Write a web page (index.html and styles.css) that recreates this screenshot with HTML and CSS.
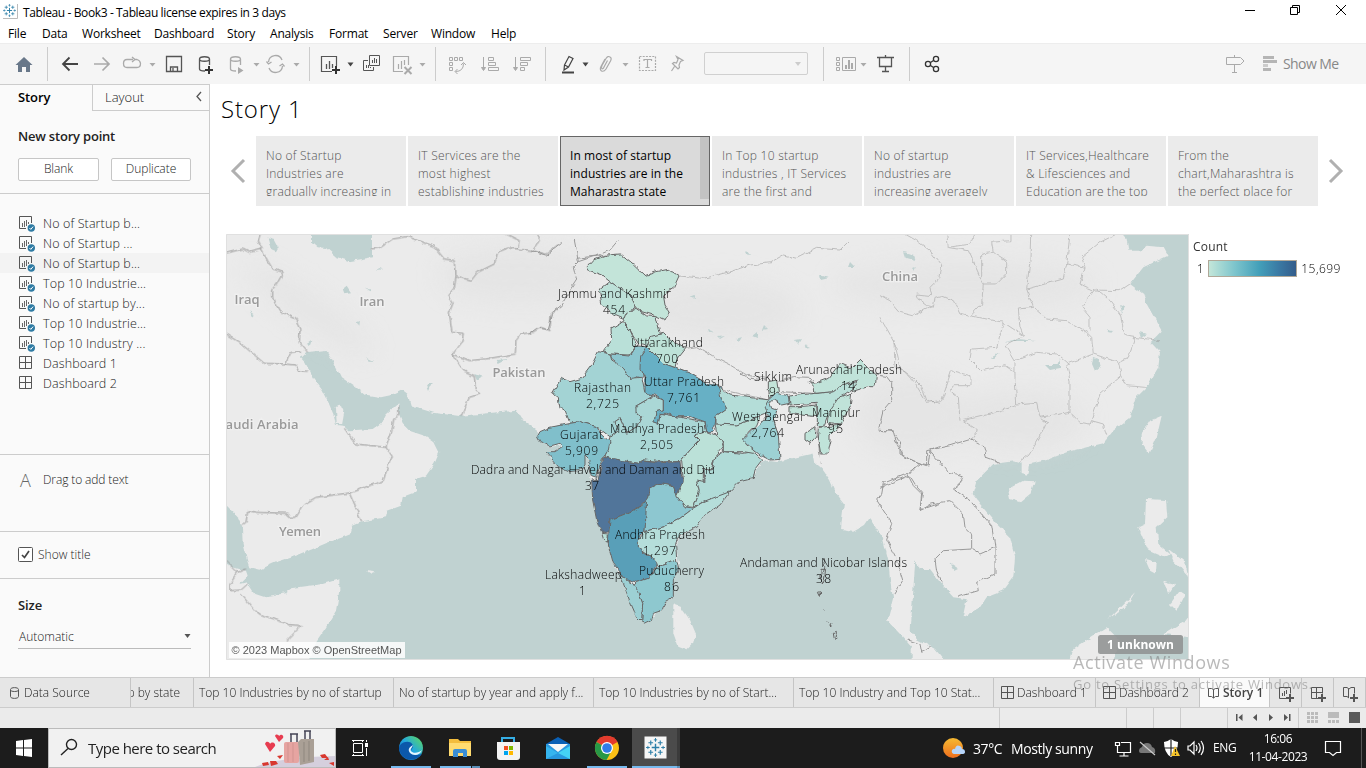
FILE: index.html
```html
<!DOCTYPE html>
<html lang="en">
<head>
<meta charset="utf-8">
<title>Tableau - Book3</title>
<link rel="stylesheet" href="styles.css">
</head>
<body>
<svg class="defs" width="0" height="0" aria-hidden="true">
  <defs>
    <symbol id="caret" viewBox="0 0 6 4"><path d="M0 0H6L3 4Z"/></symbol>
    <symbol id="sheet" viewBox="0 0 18 18"><path d="M13.500 8V1.500H1.500V13.500H8" fill="none" stroke="#555"/><path d="M4.500 8v4M6.500 6v6M8.500 5v6M10.500 7v2" stroke="#666"/><circle cx="13.300" cy="13" r="3.700" fill="#2f7ba3"/><path d="M11.500 13l1.300 1.400 2.300-2.800" fill="none" stroke="#fff"/></symbol>
    <symbol id="dash" viewBox="0 0 14 14"><path d="M.5.5h12v12H.5zM6.500.5v12M.5 6.500h12" fill="none" stroke="#555"/></symbol>
    <symbol id="tablogo" viewBox="0 0 20 20"><g fill="none" stroke="#2d7fa8"><path stroke-width="1.500" d="M10 6v8M6 10h8"/><path stroke-width="1.200" d="M5 2.500v5M2.500 5h5M15 2.500v5M12.500 5h5M5 12.500v5M2.500 15h5M15 12.500v5M12.500 15h5"/><path stroke-width="1" d="M10 0v4M8.300 2h3.400M10 16v4M8.300 18h3.400M0 10h4M2 8.300v3.400M16 10h4M18 8.300v3.400"/></g></symbol>
  </defs>
</svg>
<div class="window">
  <header class="titlebar">
    <svg class="applogo" width="16" height="16"><use href="#tablogo" width="13" height="13"/><path d="M14.500 0v14.500H0" fill="none" stroke="#bbb"/></svg>
    <span class="wintitle">Tableau - Book3 - Tableau license expires in 3 days</span>
    <svg width="136" height="24" viewBox="1230 0 136 24" fill="none" stroke="#000"><path d="M1245 10.500h10M1290.500 7.500h7v7h-7zM1292.500 7v-1.500h7v7h-2M1336 5l10 10M1346 5l-10 10"/></svg>
  </header>
  <nav class="menubar"><span class="m1">File</span><span class="m2">Data</span><span class="m3">Worksheet</span><span class="m4">Dashboard</span><span class="m5">Story</span><span class="m6">Analysis</span><span class="m7">Format</span><span class="m8">Server</span><span class="m9">Window</span><span>Help</span></nav>
  <div class="toolbar">
    <svg width="47" height="41" viewBox="0 43 47 41"><path d="M15.500 65L24 57l8.500 8H30v7h-4v-5h-4v5h-4v-7z" fill="#687789"/></svg>
    <i class="sep"></i>
    <svg width="261" height="41" viewBox="48 43 261 41" fill="none" stroke="#aaa" stroke-width="1.300">
      <path d="M78 64H63M69.500 57.500L63 64l6.500 6.500" stroke="#444" stroke-width="1.800"/>
      <path d="M94 64h15M102.500 57.500L109 64l-6.500 6.500" stroke-width="1.700"/>
      <path d="M133 59.500h-6q-3.500 0-3.500 4t3.500 4h10q3.500 0 3.500-4-.2-3-3.500-4h-3M132 57l3 2.500-3 2.500"/>
      <path d="M149.500 63h6l-3 3.500z" fill="#aaa" stroke="none"/>
      <path d="M166.500 56.500h15v15h-15zM170.500 71v-4h7v4M173 68v3" stroke="#555"/>
      <path d="M205 71q-5.500 0-5.500-2V59c0-3 10-3 10 0v6M199.500 59c0 3 10 3 10 0" stroke="#555"/>
      <path d="M209 66v8M205 70h8" stroke="#333" stroke-width="2"/>
      <path d="M236 71q-5.500 0-5.500-2V59c0-3 10-3 10 0v6M230.500 59c0 3 10 3 10 0"/>
      <path d="M238 67l5.500 3.500-5.500 3.500zM253.500 63h6l-3 3.500zM293.500 63h6l-3 3.500z" fill="#aaa" stroke="none"/>
      <path d="M268.500 62a7 7 0 0 1 13.500-2M282.500 66a7 7 0 0 1-13.500 2M266.500 61.500l2 2.500 3-2M279.500 66l3-2 2 2.500"/>
    </svg>
    <i class="sep"></i>
    <svg width="125" height="41" viewBox="310 43 125 41" fill="none" stroke="#555">
      <path d="M332 71.500h-10.500v-15h15V66" stroke-width="1.200"/><path d="M326.500 64v5M329.500 61v8M332.500 64v4" stroke-width="1.300"/><path d="M332 70h8M336 66v8" stroke="#333" stroke-width="2"/>
      <path d="M347.500 62.500h6l-3 4z" fill="#444" stroke="none"/>
      <path d="M369.500 55.500h10v10h-10zM368 60.500h-4.500v10h10V67M372.500 63v-3M374.500 63v-5M376.500 63v-4M366.500 68v-3M368.500 68v-3M370.500 68v-1"/>
      <g stroke="#aaa"><path d="M403 71.500h-9.500v-15h15V65M398.500 64v5M401.500 61v8M404.500 60v5" stroke-width="1.200"/><path d="M404.500 67l7 7M411.500 67l-7 7" stroke-width="2"/></g>
      <path d="M419.500 63h6l-3 3.500z" fill="#aaa" stroke="none"/>
    </svg>
    <i class="sep"></i>
    <svg width="109" height="41" viewBox="436 43 109 41" fill="none" stroke="#aaa">
      <path d="M449.500 57.500h3v3h-3zM454.500 57.500h3v3h-3zM459.500 57.500h3v3h-3zM449.500 62.500h3v3h-3zM449.500 67.500h3v3h-3zM455.500 71.500q8 0 8-8M461 65l2.500-2.500 2.500 2.500M457.500 69l-2.500 2.500 2.500 2.500"/>
      <path d="M483.500 57v12M488.500 57.500h5v3h-5zM488.500 62.500h7v3h-7zM488.500 67.500h10v3h-10z"/><path d="M481.500 67.500h4l-2 3z" fill="#aaa"/>
      <path d="M515.500 57v12M520.500 57.500h10v3h-10zM520.500 62.500h7v3h-7zM520.500 67.500h4v3h-4z"/><path d="M513.500 67.500h4l-2 3z" fill="#aaa"/>
    </svg>
    <i class="sep"></i>
    <svg width="158" height="41" viewBox="546 43 158 41" fill="none" stroke="#aaa" stroke-width="1.200">
      <path d="M564.500 65l4.500-8.500 4 2-4.500 8.500-4.500 3zM564.500 65l4 2" stroke="#444"/><path d="M562 72.500h12" stroke="#444" stroke-width="2"/>
      <path d="M582.500 62.500h6l-3 4z" fill="#444" stroke="none"/><path d="M622.500 63h6l-3 3.500z" fill="#aaa" stroke="none"/>
      <path d="M607.500 60.500l-3.500 6.500q-1 2.500-2 1.500-1-.5 0-3l4-7q2-3 4-1.500 2 1 .5 4l-4.500 8q-2 3-4.500 2-2-1.500-.5-4.500l4-7.500"/>
      <path d="M639.500 56.500h16v14h-16z" stroke-dasharray="2 1.200"/><path d="M644 61v-1.500h7.500V61M647.500 60v7.500M645.500 67.500h4"/>
      <path d="M676.500 56.500l6.500 4-2.500 1-1.500 3.500.5 2.500-1.500 1.500-5.500-5.500 1.500-1 2.500.5 1.500-3.500zM674.500 66.500l-3 4.500"/>
    </svg>
    <div class="combo"><svg width="6" height="4"><use href="#caret" fill="#ccc"/></svg></div>
    <i class="sep sepcombo"></i>
    <svg width="85" height="41" viewBox="824 43 85 41" fill="none" stroke="#aaa">
      <path d="M836.500 57.500h3v3h-3zM836.500 62.500h3v3h-3zM836.500 67.500h3v3h-3zM842.500 57.500h13v13h-13z"/><path d="M846 69v-4M849 69v-9M852 69v-6" stroke-width="2"/><path d="M860.500 63h6l-3 3.500z" fill="#aaa" stroke="none"/>
      <path d="M877 57.500h17M879.500 58v8.500h12v-8.500M885.500 55v3M885.500 67v5M882 71.500h7" stroke="#555" stroke-width="1.300"/>
    </svg>
    <i class="sep"></i>
    <svg width="40" height="41" viewBox="910 43 40 41" fill="none" stroke="#333" stroke-width="1.300"><circle cx="928" cy="64" r="2.600"/><circle cx="936" cy="59" r="2.600"/><circle cx="936" cy="69" r="2.600"/><path d="M930.500 62.500l3-2M930.500 65.500l3 2"/></svg>
    <svg class="push" width="60" height="41" viewBox="1220 43 60 41"><path d="M1226.500 57.500h14l3.500 3.500-3.500 3.500h-14zM1234.500 55v2M1234.500 65v7M1232 72.500h5" fill="none" stroke="#aaa"/><path d="M1263 56h11v3h-11zM1263 60h14v3h-14zM1263 68h8v3h-8z" fill="#b5b5b5"/><path d="M1263 64h5v3h-5z" fill="#ccc"/></svg>
    <span class="showme">Show Me</span>
  </div>

  <main class="work">
    <aside class="side">
      <div class="sidetabs"><b>Story</b><span>Layout</span><svg width="8" height="12"><path d="M6 1L2 5.500 6 10" fill="none" stroke="#555" stroke-width="1.300"/></svg></div>
      <section class="newpoint"><b>New story point</b><div class="btns"><span class="btn">Blank</span><span class="btn">Duplicate</span></div></section>
      <section class="sheets">
        <div class="row"><svg><use href="#sheet" width="18" height="18"/></svg>No of Startup b...</div>
        <div class="row"><svg><use href="#sheet" width="18" height="18"/></svg>No of Startup ...</div>
        <div class="row on"><svg><use href="#sheet" width="18" height="18"/></svg>No of Startup b...</div>
        <div class="row"><svg><use href="#sheet" width="18" height="18"/></svg>Top 10 Industrie...</div>
        <div class="row"><svg><use href="#sheet" width="18" height="18"/></svg>No of startup by...</div>
        <div class="row"><svg><use href="#sheet" width="18" height="18"/></svg>Top 10 Industrie...</div>
        <div class="row"><svg><use href="#sheet" width="18" height="18"/></svg>Top 10 Industry ...</div>
        <div class="row"><svg><use href="#dash" x="1" y="1" width="14" height="14"/></svg>Dashboard 1</div>
        <div class="row"><svg><use href="#dash" x="1" y="1" width="14" height="14"/></svg>Dashboard 2</div>
      </section>
      <section class="dragtext"><span class="bigA">A</span>Drag to add text</section>
      <section class="showtitle"><svg width="15" height="15"><rect x=".5" y=".5" width="14" height="14" rx="1" fill="#fff" stroke="#555"/><path d="M4 8l2.500 2.500L11 4" fill="none" stroke="#444" stroke-width="1.700"/></svg>Show title</section>
      <section class="size"><b>Size</b><div class="select">Automatic<svg width="7" height="4"><use href="#caret" fill="#555"/></svg></div></section>
    </aside>
    <div class="story">
      <h1>Story 1</h1>
      <div class="points">
        <svg class="arrow" width="16" height="26"><path d="M14 2L3 13l11 11" fill="none" stroke="#b0b0b0" stroke-width="3"/></svg>
        <div class="pt"><p>No of Startup<br>Industries are<br>gradually increasing in</p></div>
        <div class="pt"><p>IT Services are the<br>most highest<br>establishing industries</p></div>
        <div class="pt cur"><p>In most of startup<br>industries are in the<br>Maharastra state</p></div>
        <div class="pt"><p>In Top 10 startup<br>industries , IT Services<br>are the first and</p></div>
        <div class="pt"><p>No of startup<br>industries are<br>increasing averagely</p></div>
        <div class="pt"><p>IT Services,Healthcare<br>&amp; Lifesciences and<br>Education are the top</p></div>
        <div class="pt"><p>From the<br>chart,Maharashtra is<br>the perfect place for</p></div>
        <svg class="arrow r" width="18" height="26"><path d="M3 2l11 11L3 24" fill="none" stroke="#b0b0b0" stroke-width="3"/></svg>
      </div>
      <div class="viz">
        <svg class="map" width="963" height="426" viewBox="226 234 963 426">
          <defs>
            <filter id="coast" x="0" y="0" width="1" height="1" color-interpolation-filters="sRGB"><feTurbulence type="fractalNoise" baseFrequency=".15" numOctaves="2" seed="4" result="n"/><feDisplacementMap in="SourceGraphic" in2="n" scale="4.500" xChannelSelector="R" yChannelSelector="G"/></filter>
            <filter id="soft"><feGaussianBlur stdDeviation="12"/></filter>
          </defs>
          <path d="M226 234h963v426H226z" fill="#c0d2d1"/>
          <g filter="url(#coast)">
            <path d="M200 210h1010v470H200z" fill="#c0d2d1"/>
            <g fill="#ebebeb">
              <g transform="translate(226 234) scale(.33333)">
                <path d="M-30 -30H1200V600L930 588 910 572 885 555 870 530 790 537 700 546 620 536 555 517 545 480 530 468 500 482 465 490 420 482 390 460 345 430 318 375 300 348 240 355 225 370 235 380 260 430 290 470 305 500 322 540 330 572 352 575 370 592 400 590 440 588 465 570 480 540 517 508 520 545 530 570 550 590 600 607 625 625 640 655 625 690 600 725 570 735 570 775 530 790 525 815 485 830 480 850 410 862 378 875 375 900 350 910 300 928 260 945 210 965 150 985 100 1007 70 1000 62 975 50 930 48 880 35 850 -30 780z"/>
                <path d="M-30 975L20 1000 60 1010 65 1025 40 1050 62 1045 85 1080 110 1088 180 1078 200 1062 290 1050 340 1035 340 1070 330 1130 300 1180 265 1230 240 1300H-30zM418 1008L450 1012 430 1020z"/>
                <path d="M258 -30V25L275 40 300 42 330 68 370 82 438 70V-30zM125 10L145 15 158 40 150 55 135 48zM350 165L362 155 375 175 355 178zM418 163h14v6zM452 108l12-6 8 4zM392 265l10-4-2 14zM420 372l25 12-14-1zM602 450l15 0-8 18zM745 420l22 8-15 10zM812 378l36-3-30 15zM70 232l18 12-8 8zM242 330l15-10-5 14z" fill="#c0d2d1"/>
                <path d="M330 520Q342 500 355 530L348 570 332 570z"/>
              </g>
              <path d="M530 210H1100V430H890L850 445 776 462 560 430 530 420z"/>
              <g transform="translate(530 420) scale(.33333)">
                <path d="M20 35L30 65 60 80 98 76 75 95 48 95 65 120 90 145 115 156 150 152 167 110 180 120 178 150 188 230 200 290 215 340 235 370 248 420 262 458 285 500 305 545 320 590 345 611 365 600 380 575 400 570 405 545 430 530 430 485 447 430 437 380 450 350 490 325 520 290 590 230 620 190 670 172 698 120 715 85 740 -30H20z"/>
                <path d="M430 553L452 560 480 600 497 640 490 670 470 690 445 680 430 640z"/>
              </g>
              <g transform="translate(740 340) scale(.33333)"><path d="M-30 200L45 400 50 375 85 360 120 358 160 352 200 338 216 330 222 365 245 385 270 420 285 455 312 490 305 545 303 570 340 575 375 555 395 525 415 550 430 600 445 660 450 720 460 780 450 830 480 870 510 900 530 600 500 100 0 100z"/></g>
              <g transform="translate(880 234) scale(.33333)">
                <path d="M-40 -30V840L20 930 30 1000 40 1090 22 1160 60 1200 95 1240 95 1300H210L165 1245 110 1215 75 1170 65 1120 45 1090 70 1045 80 990 105 975 120 1005 150 1005 180 1045 220 1090 260 1095 248 1150 300 1120 320 1090 370 1070 400 1030 405 970 390 910 350 870 300 810 278 780 290 740 340 690 400 682 425 690 425 720 445 725 450 690 500 678 560 655 620 640 670 628 700 590 750 550 770 490 800 460 835 400 840 355 812 325 845 290 800 210 790 180 750 150 790 100 864 65 850 40 800 35 780 50 745 50 740 15 700 -30z"/>
                <path d="M384 765L430 740 464 742 450 780 420 805 390 795zM785 600L810 560 845 545 830 610 808 660 785 630zM798 795L858 798 862 850 830 880 835 930 870 960 850 970 805 950 775 880 795 870zM795 975L830 985 828 1020 810 1010zM865 945L915 985 925 1030 900 1000 880 980zM850 1040L885 1050 865 1080zM900 1070L915 1080 890 1130 870 1110zM685 1155L765 1075 740 1115zM580 1245L680 1180 720 1220 700 1280H570zM850 1200L930 1150V1210z"/>
              </g>
            </g>
            <g filter="url(#soft)" fill="#dfdfdf" opacity=".5"><ellipse cx="520" cy="275" rx="80" ry="28"/><ellipse cx="310" cy="310" rx="75" ry="14" transform="rotate(35 310 310)"/><ellipse cx="910" cy="415" rx="55" ry="40"/><ellipse cx="1020" cy="420" rx="65" ry="30"/><ellipse cx="965" cy="285" rx="130" ry="24"/><ellipse cx="720" cy="310" rx="80" ry="30"/></g>
            <g fill="#c0d2d1"><path d="M690 297l5-2v4zM708 330l6 2-5 1zM718 337l7-1-5 3zM736 339l6-2-3 5zM752 336l5-4v6zM764 325l4 4-6 1zM795 340l6-1-3 5zM806 345l4 2-6 1zM746 250l4 5-5-1zM820 275l9 3-8 2zM850 262l5 5-7 0zM904 252l10 3 2 6-10-3zM912 268l5-2-3 5zM1045 365l12 0 3-6v9l-10 2zM1093 358l6 2 2 6-6 5-3-7zM1120 304l5 3-3 7zM1107 330l6 1-3 3zM1139 332l8 2-6 4zM950 563l9 6-4 2z"/><path d="M1005 342l12-3 19 2-20 0zM990 358l10-5-7 6z"/></g>
            <g fill="none" stroke="#999" stroke-width="1">
              <g transform="translate(226 234) scale(.33333)" class="b">
                <path d="M-10 60L50 45 70 55 110 45 97 20 105 -10M105 45L125 80 140 105 172 115 155 145 140 165 140 190 160 230 210 255 222 290 220 325 245 355M-10 295L40 325 115 388 178 390 210 393 218 410 245 412M178 390L195 355 228 352"/>
                <path d="M435 45L460 42 500 15 545 8 590 25 625 38 655 75 688 80 690 125 685 160 665 185 680 210 670 235 678 295 712 298 708 325 680 360 712 410 745 425 748 465 762 480 730 490 705 548M690 125L735 140 755 115 805 90 815 55 845 42 875 45 880 20 840 0M875 45L920 50 940 20 930 0M920 50L960 60 993 35M680 360L730 380 780 375 868 360 870 320 885 300 920 295 945 280 972 290 975 240 993 225"/>
                <path d="M518 515v30l-15 10-5 35-18 50L390 630 352 580M480 640L496 665 472 740 370 777 270 790 235 810 210 850 190 850 185 838 90 835 65 830 60 865 48 875M370 777L407 862M-10 970L35 1015 60 1005M35 1015L12 1050 12 1070 45 1068 65 1050M45 1080L90 1135 190 1172 226 1175 180 1222"/>
              </g>
              <g transform="translate(530 240) scale(.33333)" class="b"><path d="M0 280L20 265 55 268 70 215 95 195 120 150 140 120 130 80 145 65 190 50 230 45M145 65L133 0M140 55L200 48 240 30 265 0M0 30L50 45 95 10" /><path d="M468 325L500 320 550 350 600 375 650 405 710 415M435 383L480 400 530 430 600 455 715 480" opacity=".8"/><path d="M447 108L520 115 600 95 660 75 720 68 760 45 800 55 860 25 930 30 960 0" opacity=".55"/></g>
              <g transform="translate(740 340) scale(.33333)" class="b"><path d="M0 100L30 115 80 120M115 125L160 110 208 112 225 130M120 155L220 160M410 105L440 110 455 130 455 180 430 210 415 270 460 275 470 310 490 350 540 370 540 375 505 400 430 430 425 460 410 480 455 550 440 600 470 660 488 720 460 765M505 400L530 440 548 460 540 510 600 490M540 370L565 375 570 330 600 320M150 220L232 230M230 265L243 370"/><path d="M462 0L465 85 495 95 520 115 545 140 560 180 600 190" opacity=".5"/></g>
              <g transform="translate(880 234) scale(.33333)" class="b">
                <g opacity=".5"><path d="M75 0L110 20 150 50 185 95 180 130 150 160 155 185 110 180 120 200 140 215 160 220 165 190 185 185 220 200 240 240 270 248 305 210 310 150 265 50 205 40 200 0M160 215L100 245 60 235 30 200 0 185M305 130V60L340 55 380 80 380 120 350 150 310 150M340 55L335 25 390 20 390 0M205 40L270 30 285 0M452 0L450 80 440 165 460 220 500 255 560 260 620 295 635 310 640 360 560 390 570 440 570 535 600 565 630 570 660 480 725 425 715 385 640 360M570 0L560 90 550 135 440 165M560 90L615 100 605 70 660 25 710 0M615 100L600 150 640 168 720 170 750 150M650 165L690 200 720 240 735 305 765 310 840 320M765 310L745 370 715 385M725 425L740 455 795 460M270 245L370 265 430 305 375 335 405 385 405 430 410 510 470 505 480 550 570 535M460 220L415 225 420 280 430 305M370 265L350 340 275 345 270 375 305 410 375 395 405 415M405 380L470 355 530 360 570 395M410 515L330 540 250 560 295 590 275 615M240 560L235 490 210 470 220 455 270 455 270 425 215 410 185 500 140 505 100 440 60 400 45 330 0 250M480 550L500 565 480 610 450 660 420 685M635 560L670 570 680 605M645 165L605 220 630 250 630 290"/></g>
                <path d="M0 590L40 590 60 625 60 660 110 685 140 695 140 650 210 635 275 615 310 635 320 670 360 685M150 650L185 690 205 715 250 725 240 750 220 765 270 800 335 875 345 940 345 1020 290 1045 295 1070 235 1088M85 725L100 755 125 780 120 830 155 810 210 800 250 840 255 880 275 900 275 945 300 960 345 940M275 945L190 950 165 975 170 1010 185 1045M0 760L85 725 115 690M85 1218L120 1230 125 1255 155 1240"/>
              </g>
            </g>
            <g stroke="#666" class="b" stroke-linejoin="round">
              <g transform="translate(530 240) scale(.33333)">
                <path fill="#c3e4d9" d="M172 80L190 60 230 45 270 42 310 75 345 108 380 95 415 88 447 108 430 145 400 165 405 195 418 215 405 240 380 228 335 215 318 200 300 165 270 145 240 125 215 105 180 92z"/>
                <path fill="#bde1d8" d="M240 125L270 145 300 165 318 200 290 220 285 240 250 225 215 190 208 150z"/>
                <path fill="#c0e3d9" d="M318 205L350 228 378 230 392 285 365 290 350 315 325 310 300 270 280 245 290 220z"/>
                <path fill="#b9e0d8" d="M275 245L300 270 320 315 300 345 240 342 220 335 245 300 243 265z"/>
                <path fill="#bde2d8" d="M360 290L400 280 420 300 468 325 440 360 435 383 400 370 350 325z"/>
                <path fill="#8cc6cf" d="M240 342L300 348 320 318 350 320 335 340 335 380 340 415 320 410 305 420 270 375 245 355z"/>
                <path fill="#a3d3d4" d="M205 335L240 342 245 360 270 375 300 415 335 412 345 460 370 468 315 500 320 525 335 530 320 560 290 580 270 535 255 545 265 570 240 590 200 560 150 545 120 550 105 510 90 505 85 475 67 460 95 415 120 425 155 415 185 375z"/>
              </g>
              <g transform="translate(530 420) scale(.33333)">
                <path fill="#aad7d6" d="M370 -72L400 -60 400 -30 378 -25 372 5 385 10 390 -20 440 -10 525 5 530 35 500 50 510 60 480 90 450 125 400 125 340 120 325 130 240 115 225 110 235 75 240 50 265 30 255 5 270 -5 290 40 320 20 335 -10 315 -20 315 -40z"/>
                <path fill="#67b0c5" d="M350 -220L370 -200 400 -170 435 -157 480 -140 530 -110 575 -100 580 -60 590 -35 555 -10 550 35 530 35 525 5 480 -10 440 -10 410 -20 390 -20 385 10 372 5 378 -25 400 -30 400 -60 375 -75 345 -80 345 -125 330 -155 332 -195z"/>
                <path fill="#80bfcb" d="M30 35L60 22 120 10 150 5 200 20 215 45 240 65 235 90 218 115 205 150 200 175 185 170 178 150 180 120 165 105 165 135 150 152 115 155 85 140 48 95 75 95 100 80 90 70 60 78 30 65 22 50z"/>
                <path fill="#51759a" d="M240 115L325 130 340 120 400 128 450 125 455 170 460 190 440 230 430 200 390 190 360 205 355 235 330 260 290 280 240 300 238 335 215 340 200 300 188 240 185 180 205 178 210 150 222 112z"/>
                <path fill="#b8dfd7" d="M215 340L235 342 232 370 222 362z"/>
                <path fill="#599fb8" d="M240 300L290 280 335 258 350 240 350 290 345 335 330 345 325 385 345 400 375 420 380 440 355 475 320 487 285 475 250 430 235 375 237 330z"/>
                <path fill="#8dc7d0" d="M350 240L360 205 390 190 430 200 445 235 465 260 490 265 450 295 400 320 345 335z"/>
                <path fill="#b5deda" d="M345 335L400 320 450 295 490 265 520 245 560 225 600 215 570 255 520 290 500 320 450 345 437 370 440 420 385 440 370 415 345 400 325 385 325 360z"/>
                <path fill="#8ec8cf" d="M320 487L355 475 385 440 440 420 447 450 430 480 430 530 405 545 398 570 370 580 365 600 345 610 335 605 338 550 325 515 308 500z"/>
                <path fill="#9dd0d4" d="M262 455L285 475 308 490 325 515 338 550 335 605 320 590 300 545 280 490z"/>
                <path fill="#bbe1d8" d="M530 35L570 50 580 80 555 110 545 145 520 150 520 185 500 180 508 215 490 262 465 260 440 228 460 185 455 120 480 90 510 60 495 45z"/>
                <path fill="#b0dbd7" d="M580 95L640 100 670 95 698 120 675 150 670 175 630 185 600 215 520 245 490 262 508 215 500 180 525 185 522 150 548 145 555 110z"/>
                <path fill="#b4ddd8" d="M565 -100L600 -75 680 -65 720 -60 715 -20 690 -10 620 15 555 12 555 -10 590 -35 575 -60z"/>
                <path fill="#b8dfd7" d="M555 12L620 15 690 -10 680 15 645 50 650 75 690 85 670 100 640 95 580 95 580 70 560 45z"/>
              </g>
              <g transform="translate(740 340) scale(.33333)">
                <path fill="#9dd1d4" d="M90 190L95 205 110 210 100 240 115 285 120 358 90 360 60 345 30 320 10 300 40 270 75 240 85 225 75 200 88 180 110 160 145 168 148 190 125 195 100 180z"/>
                <path fill="#c3e4d9" d="M85 125L110 120 115 155 90 175 85 150z"/>
                <path fill="#b9e0d8" d="M148 168L225 160 280 155 300 140 350 125 355 135 310 165 290 195 262 230 250 260 232 260 232 190 150 195z"/>
                <path fill="#c0e3d9" d="M150 200L180 200 230 195 232 230 180 225 150 220zM225 130L265 115 300 70 335 85 360 60 385 85 410 105 405 140 385 140 335 155 355 120 300 140 280 155 225 160 222 140 208 125zM335 160L330 200 300 255 262 250 265 220 300 170zM238 262L300 256 270 285 270 300 260 345 243 345 235 300zM195 280L225 260 228 290 210 310 195 300z"/>
                <path fill="none" d="M250 655l4 25-5 20M243 685l14 0-4 35-6 15-4-20zM235 757l7-2-2 12zM248 812l2 2M260 845l3 2M270 852l6-2-4 8zM280 880l6-3 5 15-8 6z"/>
              </g>
            </g>
          </g>
          <g class="land" text-anchor="middle"><text x="247" y="304" textLength="25">Iraq</text><text x="372" y="306" textLength="25">Iran</text><text x="519" y="377" textLength="53">Pakistan</text><text x="262" y="429" textLength="73">audi Arabia</text><text x="300" y="536" textLength="42">Yemen</text><text x="900" y="281" textLength="36">China</text></g>
          <g class="mark">
            <text x="558" y="298" textLength="113">Jammu and Kashmir</text><text x="603" y="314" textLength="22">454</text>
            <text x="631" y="347" textLength="72">Uttarakhand</text><text x="656" y="363" textLength="22">700</text>
            <text x="574" y="392" textLength="57">Rajasthan</text><text x="586" y="408" textLength="33">2,725</text>
            <text x="644" y="386" textLength="80">Uttar Pradesh</text><text x="667" y="402" textLength="33">7,761</text>
            <text x="754" y="381" textLength="38">Sikkim</text><text x="769" y="396">9</text>
            <text x="796" y="374" textLength="106">Arunachal Pradesh</text><text x="841" y="390" textLength="14">14</text>
            <text x="732" y="421" textLength="71">West Bengal</text><text x="751" y="437" textLength="33">2,764</text>
            <text x="812" y="417" textLength="48">Manipur</text><text x="828" y="433" textLength="15">95</text>
            <text x="560" y="439" textLength="43">Gujarat</text><text x="565" y="455" textLength="33">5,909</text>
            <text x="610" y="433" textLength="94">Madhya Pradesh</text><text x="640" y="449" textLength="33">2,505</text>
            <text x="471" y="474" textLength="244">Dadra and Nagar Haveli and Daman and Diu</text><text x="585" y="490" textLength="14">37</text>
            <text x="615" y="539" textLength="90">Andhra Pradesh</text><text x="643" y="555" textLength="33">1,297</text>
            <text x="545" y="579" textLength="77">Lakshadweep</text><text x="579" y="595">1</text>
            <text x="639" y="575" textLength="65">Puducherry</text><text x="664" y="591" textLength="15">86</text>
            <text x="740" y="567" textLength="167">Andaman and Nicobar Islands</text><text x="816" y="583" textLength="15">38</text>
          </g>
          <path d="M229 642h176v16H229z" fill="#fff" opacity=".85"/><text x="231.500" y="654" textLength="170" class="attr">© 2023 Mapbox © OpenStreetMap</text>
          <rect x="1098" y="635" width="85" height="19" rx="2.500" fill="#8f9292" opacity=".88"/><text x="1107" y="649" textLength="67" class="unk">1 unknown</text>
          <path d="M226.500 234.500h962v425h-962z" fill="none" stroke="#e0e0e0"/>
        </svg>
        <div class="legend"><span>Count</span><div class="scale"><span>1</span><i></i><span>15,699</span></div></div>
      </div>
    </div>
  </main>

  <div class="tabs">
    <span class="tab t0"><svg width="10" height="12"><path d="M.5 2.500c0-2.500 8-2.500 8 0v7c0 2.500-8 2.500-8 0zM.5 3c0 2 8 2 8 0" fill="none" stroke="#555"/></svg>Data Source</span>
    <span class="tab t1">p by state</span><span class="tab w">Top 10 Industries by no of startup</span><span class="tab w">No of startup by year and apply f...</span><span class="tab w">Top 10 Industries by no of Start...</span><span class="tab w">Top 10 Industry and Top 10 Stat...</span>
    <span class="tab t2"><svg width="13" height="13"><use href="#dash" width="14" height="14"/></svg>Dashboard 1</span><span class="tab t3"><svg width="13" height="13"><use href="#dash" width="14" height="14"/></svg>Dashboard 2</span>
    <span class="tab t4"><svg width="13" height="12"><path d="M6.500 2.500L4.500 1.500H1.500v8h3l2 1.500 2-1.500h3v-8h-3zV11" fill="none" stroke="#555"/></svg>Story 1</span>
    <span class="tab add"><svg width="32" height="30" viewBox="1270 677 32 30" fill="none" stroke="#555"><path d="M1286 697.500h-6.500v-11h11v6M1282.500 695v-3M1284.500 695v-5M1286.500 693v-4"/><path d="M1290 693v8M1286 697h8" stroke-width="2"/></svg></span>
    <span class="tab add"><svg width="32" height="30" viewBox="1302 677 32 30" fill="none" stroke="#555"><path d="M1318 697.500h-6.500v-11h11v6M1316.500 686v11M1311 691.500h11"/><path d="M1322 693v8M1318 697h8" stroke-width="2"/></svg></span>
    <span class="tab add"><svg width="32" height="30" viewBox="1334 677 32 30" fill="none" stroke="#555"><path d="M1349 697l-2-1.500h-3.500v-9h3.500l2 1.500 2-1.500h3.500v6M1348.500 688v9"/><path d="M1354 693v8M1350 697h8" stroke-width="2"/></svg></span>
  </div>
  <div class="status"><svg width="367" height="20" viewBox="1000 708 366 20"><path d="M1126.500 708v20M1153.500 708v20M1180.500 708v20M1227.500 708v20M1298.500 708v20" stroke="#ccc"/><path d="M1236 714h1.500v7h-1.500zM1242.500 714v7l-4-3.500zM1257 714v7l-4-3.500zM1269 714v7l4-3.500zM1284 714v7l4-3.500zM1289 714h1.500v7h-1.500z" fill="#555"/><path d="M1307 712h3v3h-3zM1311 712h3v3h-3zM1315 712h3v3h-3zM1307 716h3v3h-3zM1311 716h3v3h-3zM1315 716h3v3h-3zM1307 720h3v3h-3zM1311 720h3v3h-3zM1315 720h3v3h-3zM1328 712h11v6h-11zM1328 720h3v3h-3zM1332 720h3v3h-3zM1336 720h3v3h-3z" fill="#bbb"/><path d="M1349 712h11v11h-11z" fill="#5a5a5a"/></svg></div>

  <footer class="taskbar">
    <svg width="48" height="40" viewBox="0 728 48 40"><path d="M16 741l7-1v7.500h-7zM24 740l8-1v8.500h-8zM16 748.500h7v7.500l-7-1zM24 748.500h8v8.500l-8-1z" fill="#fff"/></svg>
    <div class="search"><svg width="20" height="20"><circle cx="11.500" cy="6.500" r="5" fill="none" stroke="#222" stroke-width="1.400"/><path d="M8 10.500L1 17" stroke="#222" stroke-width="1.400"/></svg><span>Type here to search</span>
      <svg class="lug" width="80" height="38" viewBox="255 729 80 38"><path d="M255 767q25-10 80-11v11z" fill="#d5cfdd"/><path d="M291 742v-8M297 742v-8M290 734h8M305 740v-9M310 740v-9M304 731h7" stroke="#445" stroke-width="1.500"/><rect x="284" y="742" width="15" height="21" rx="2" fill="#e6a4a1"/><path d="M288 743v19M293 743v19" stroke="#d29390"/><path d="M298 742l3-3h13v23l-14 3z" fill="#aaa096"/><path d="M304 742v20M309 741v20" stroke="#8f877e"/><path d="M265 744c1-4 5-2 5 0 2-3 6-1 5 2l-5 6zM275 736c1-3 4-1 4 0 3-3 5 0 4 2l-4 4z" fill="#e73c50"/><path d="M262 763l6-1 1 3-6 1zM270 761l6 0 2 3-7 2zM277 756l6-1-3 4zM320 755l5-1 3 4-6 0zM324 760l4-3 1 3zM329 763l5-1v4z" fill="#d8382f"/></svg>
    </div>
    <svg width="344" height="40" viewBox="336 728 344 40">
      <defs><linearGradient id="eg" x1="0" y1="1" x2="1" y2="0"><stop offset="0" stop-color="#0a57b0"/><stop offset=".5" stop-color="#22a7e0"/><stop offset="1" stop-color="#62dd55"/></linearGradient></defs>
      <path d="M353.500 743.500h9v9h-9zM352 740.500h12M352 755.500h12M353.500 740v2M362.500 740v2M353.500 754v2M362.500 754v2M366.500 740v2M366.500 748v8" fill="none" stroke="#fff"/><path d="M365 743h3v4h-3z" fill="#fff"/>
      <circle cx="411" cy="748" r="12" fill="url(#eg)"/><path d="M399 749c0-8 13-10 14-3 0 3-3 4-2 6 2 5 9 2 11 2-7 9-20 7-23-5z" fill="#0b58aa"/><path d="M413 745c-1 3-3 4-2 6 2 3 8 2 11-1-2 6-9 6-12 3-3-4 0-6 3-8z" fill="#e4f6ff"/>
      <path d="M449 739h9l2 2h11v15h-22z" fill="#f3bd3d"/><path d="M449 743h22v13h-22z" fill="#ffdb70"/><path d="M453 756v-5q0-2 2-2h10q2 0 2 2v6h-4v-4h-5v4h-5z" fill="#3a8ed5"/>
      <path d="M502 743v-5h12v5" fill="none" stroke="#35aee5" stroke-width="2"/><path d="M497 742h23v15q0 3-3 3h-17q-3 0-3-3z" fill="#f3f3f3"/><path d="M504 746h4v4h-4z" fill="#f25022"/><path d="M509 746h4v4h-4z" fill="#7fba00"/><path d="M504 751h4v4h-4z" fill="#00a4ef"/><path d="M509 751h4v4h-4z" fill="#ffb900"/>
      <path d="M546 744l12-7 12 7z" fill="#0a60b5"/><path d="M546 744h24v15h-24z" fill="#2898df"/><path d="M548 744h20l-10 8z" fill="#f7f7f7"/><path d="M546 746l12 7-12 6z" fill="#36b5ef"/><path d="M558 753l12-7v13z" fill="#44d2f5"/>
      <circle cx="607" cy="748" r="12" fill="#fbc116"/><path d="M607 748l-10.500-6a12 12 0 0 1 21 0z" fill="#e33b2e"/><path d="M607 748l-10.500-6a12 12 0 0 0 10 18l5-9z" fill="#279847"/><circle cx="607" cy="748" r="6" fill="#fff"/><circle cx="607" cy="748" r="4.800" fill="#2f7ce8"/>
      <path d="M632 728h45v38h-45z" fill="#4b4b4b"/><path d="M677 728h3v38h-3z" fill="#3b3b3b"/><path d="M644.500 736.500h22v22h-22z" fill="#f6f6f6"/><use href="#tablogo" x="646" y="738" width="19" height="19"/>
      <path d="M391 766h40v2h-40zM440 766h31v2h-31zM587 766h40v2h-40zM632 766h45v2h-45z" fill="#76b9ed"/><path d="M472 766h8v2h-8zM677 766h3v2h-3z" fill="#5b8fb7"/>
    </svg>
    <svg class="push" width="36" height="40" viewBox="937 728 36 40"><defs><linearGradient id="sun" x2="0" y2="1"><stop stop-color="#f6ba32"/><stop offset="1" stop-color="#ee6e1e"/></linearGradient></defs><circle cx="953" cy="748" r="10" fill="url(#sun)"/><path d="M954 754q-3-1-2-4 2-2 3-1 1-5 5-3 2 1 2 3 3 0 3 3 0 2-3 2z" fill="#b7d5fa"/></svg>
    <span class="temp">37°C</span><span class="wx">Mostly sunny</span>
    <svg width="96" height="40" viewBox="1110 728 96 40" fill="none" stroke="#fff" stroke-width="1.200"><path d="M1121 742.500h9.500v10h-13V749M1124 753v3M1119.500 756h9M1115.500 742.500h4v3h-4zM1117.500 746v3"/><path d="M1139 751q0-3 3-4 1-4 5-4 4 0 5 4 4 1 3 6h-14q-2 0-2-2z" fill="#777" stroke="none"/><path d="M1140 742l15 13" stroke="#ccc"/><path d="M1171 739q4 3 7 3 0 11-7 15-7-4-7-15 3 0 7-3z" fill="#fff" stroke="none"/><path d="M1171 739v17M1164 748h14" stroke="#222"/><path d="M1175 746l5 10h-9z" fill="#f8c62a" stroke="none"/><path d="M1175.500 749v3M1175.500 753.500v1.500" stroke="#222"/><path d="M1188 746h2l4-4v12l-4-4h-2zM1196 745q2 3 0 6M1198.500 743q3.500 5 0 10M1201 741q5 7 0 14"/></svg>
    <span class="eng">ENG</span><div class="clock"><span>16:06</span><span>11-04-2023</span></div>
    <svg width="50" height="40" viewBox="1316 728 50 40" fill="none" stroke="#fff"><path d="M1325.500 741.500h15v11h-4l-3.500 3-3.500-3h-4z" stroke-width="1.200"/><path d="M1361.500 728v40" stroke="#555"/></svg>
  </footer>
  <div class="watermark"><div class="wm1">Activate Windows</div><div class="wm2">Go to Settings to activate Windows.</div></div>
</div>
</body>
</html>
```
FILE: styles.css
```css
* { box-sizing: border-box; }
body { margin: 0; font-family: "Open Sans", "Noto Sans", sans-serif; font-size: 12px; color: #4e4e4e; }
svg { display: block; flex: none; }
.defs { position: absolute; }
.window { position: relative; width: 1366px; height: 768px; overflow: hidden; background: #fff; display: flex; flex-direction: column; white-space: nowrap; }
.titlebar { height: 24px; display: flex; align-items: center; color: #000; padding-left: 3px; }
.applogo { margin-top: -1px; }
.wintitle { margin-left: 4px; flex: 1; font-size: 12px; letter-spacing: -.38px; }
.menubar { height: 19px; display: flex; align-items: center; padding-left: 8px; color: #000; letter-spacing: -.2px; }
.m1 { width: 34px; } .m2 { width: 40px; } .m3 { width: 72px; } .m4 { width: 73px; } .m5 { width: 43px; } .m6 { width: 59px; } .m7 { width: 54px; } .m8 { width: 48px; } .m9 { width: 60px; }
.toolbar { height: 41px; background: #f5f5f5; box-shadow: inset 0 1px #ededed; display: flex; align-items: center; }
.sep { width: 1px; height: 34px; background: #ccc; flex: none; }
.combo { width: 104px; height: 23px; border: 1px solid #d0d0d0; border-radius: 2px; display: flex; align-items: center; justify-content: flex-end; padding-right: 6px; }
.sepcombo { margin-left: 15px; }
.push { margin-left: auto; }
.showme { width: 83px; font-size: 14px; color: #888; margin-left: 3px; letter-spacing: -.6px; padding-bottom: 1px; }
.work { height: 593px; display: flex; }
.side { width: 210px; background: #fafafa; border-right: 1px solid #ccc; border-top: 1px solid #ccc; }
.side b { font-size: 13px; font-weight: 600; color: #222; letter-spacing: -.1px; }
.sidetabs { height: 26px; display: flex; line-height: 25px; }
.sidetabs b { width: 92px; padding-left: 18px; color: #000; }
.sidetabs span { width: 103px; border-left: 1px solid #ccc; border-bottom: 1px solid #ccc; padding-left: 12px; font-size: 13px; }
.sidetabs svg { width: 14px; border-bottom: 1px solid #ccc; height: 26px; padding-top: 6px; }
.newpoint { height: 83px; border-bottom: 1px solid #ccc; padding: 16px 18px 0; }
.newpoint b { display: block; line-height: 18px; font-size: 13px; letter-spacing: -.2px; }
.btns { display: flex; gap: 12px; margin-top: 13px; }
.btn { width: 81px; height: 23px; border: 1px solid #c6c6c6; border-radius: 2px; background: #fff; text-align: center; line-height: 20px; letter-spacing: -.05px; }
.btn + .btn { width: 80px; }
.sheets { height: 261px; border-bottom: 1px solid #ccc; padding-top: 19px; font-size: 12.500px; }
.row { height: 20px; display: flex; align-items: center; padding-left: 18px; letter-spacing: .12px; }
.row svg { width: 18px; height: 17px; margin-right: 7px; }
.on { background: #f3f3f3; }
.dragtext { height: 77px; border-bottom: 1px solid #ccc; padding: 12px 0 0 20px; display: flex; line-height: 26px; letter-spacing: -.12px; }
.bigA { width: 23px; font-size: 18px; color: #666; }
.showtitle { height: 47px; border-bottom: 1px solid #ccc; display: flex; align-items: center; padding: 0 0 2px 18px; gap: 5px; }
.size { padding: 17px 18px 0; }
.size b { display: block; line-height: 19px; }
.select { height: 23px; margin-top: 11px; border-bottom: 1px solid #bbb; display: flex; align-items: center; justify-content: space-between; padding: 0 0 2px 1px; }
.side, .tabs { font-weight: 300; color: #222; }
.story { width: 1156px; font-weight: 300; }
.story h1 { margin: 0; padding: 7px 0 0 11px; height: 52px; font-size: 24px; font-weight: 300; line-height: 35px; color: #000; letter-spacing: .85px; }
.points { display: flex; height: 70px; gap: 2px; align-items: center; padding-left: 20px; }
.arrow { margin: 0 8px 1px 0; }
.arrow.r { margin: 0 0 1px 7px; }
.pt { width: 150px; height: 70px; background: #ebebeb; padding: 11px 0 0 10px; color: #555; }
.pt p { margin: 0; line-height: 18px; height: 49px; overflow: hidden; font-size: 12px; letter-spacing: .25px; }
.cur { background: #dadada; border: 1px solid #666; color: #000; padding: 10px 0 0 9px; background-image: linear-gradient(#c3c3c3, #c3c3c3); background-size: 9px 62px; background-position: right 0; background-repeat: no-repeat; }
.cur p { font-weight: 400; letter-spacing: .05px; }
.viz { display: flex; padding: 28px 0 0 16px; }
.b path, path.b { vector-effect: non-scaling-stroke; }
.land { font: 600 13px "Open Sans", sans-serif; fill: #999; stroke: #f0f0f0; stroke-width: 2.500px; paint-order: stroke; }
.mark { font: 300 12px "Open Sans", sans-serif; fill: #000; }
.attr { font: 11px "Liberation Sans", sans-serif; fill: #555; }
.unk { font: 700 12px "Open Sans", sans-serif; fill: #fff; }
.legend { padding: 4px 0 0 4px; color: #000; }
.legend > span { line-height: 18px; letter-spacing: .2px; font-weight: 400; color: #333; }
.scale { display: flex; align-items: center; gap: 4px; padding-left: 4px; margin-top: 4px; letter-spacing: .45px; }
.scale i { width: 89px; height: 17px; border: 1px solid #b0a898; background: linear-gradient(90deg, #c3e6d9, #7cc4cc 30%, #439fb9 58%, #3a7aa4 80%, #345d8b); }
.tabs { height: 31px; background: #e6e6e6; border-top: 1px solid #ccc; border-bottom: 1px solid #ccc; display: flex; }
.tab { height: 29px; border-right: 1px solid #c5c5c5; display: flex; align-items: center; flex: none; overflow: hidden; font-size: 12px; }
.t0 { width: 131px; padding-left: 10px; gap: 4px; }
.t1 { width: 63px; justify-content: flex-end; padding-right: 13px; }
.w { width: 200px; padding-left: 5px; }
.t2 { width: 102px; padding-left: 7px; gap: 3px; } .t3 { width: 104px; padding-left: 7px; gap: 3px; }
.t4 { width: 70px; padding-left: 7px; gap: 3px; background: #fafafa; font-weight: 600; color: #444; }
.add { width: 32px; }
.status { height: 20px; background: #ebebeb; display: flex; justify-content: flex-end; }
.status svg { border-left: 1px solid #ccc; height: 20px; }
.taskbar { height: 40px; background: #1c1c1c; display: flex; align-items: center; color: #fff; }
.search { width: 288px; height: 40px; background: #f1f1f1; border: 1px solid #bbb; display: flex; align-items: center; padding-left: 11px; font-size: 15px; color: #222; }
.search span { margin-left: 8px; flex: 1; letter-spacing: -.52px; }
.temp { font-size: 14px; letter-spacing: -.4px; width: 38px; }
.wx { font-size: 14px; letter-spacing: -.4px; width: 99px; }
.eng { font-size: 12px; width: 35px; margin-left: 7px; letter-spacing: -.3px; padding-bottom: 1px; }
.clock { width: 68px; padding-right: 8px; font-size: 12px; display: flex; flex-direction: column; align-items: center; line-height: 18px; letter-spacing: -.4px; }
.watermark { position: absolute; left: 1073px; top: 650px; color: rgba(120, 120, 120, .52); }
.wm1 { font-size: 18px; line-height: 24px; letter-spacing: .6px; }
.wm2 { font-size: 13px; line-height: 21px; letter-spacing: .77px; }
```
